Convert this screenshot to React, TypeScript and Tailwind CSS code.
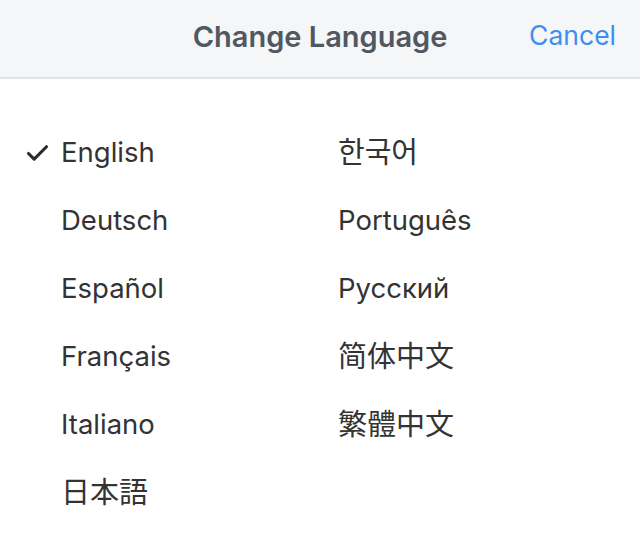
import { Check } from "lucide-react";

const left = ["English", "Deutsch", "Español", "Français", "Italiano", "日本語"];
const right = ["한국어", "Português", "Русский", "简体中文", "繁體中文"];

const cjk = ["日本語", "한국어", "简体中文", "繁體中文"];

const font = {
  fontFamily:
    'Inter, "Noto Sans CJK JP", "Noto Sans CJK KR", "Noto Sans CJK SC", sans-serif',
};

function Item({ name, selected }: { name: string; selected?: boolean }) {
  return (
    <div className="flex h-[68px] items-center">
      <div className="flex w-[37px] items-center">
        {selected && <Check className="h-[27px] w-[27px] text-[#2b2b2b]" strokeWidth={2.75} />}
      </div>
      <span
        className={
          cjk.includes(name)
            ? "text-[29px] text-[#333333]"
            : "text-[27.5px] text-[#333333]"
        }
      >
        {name}
      </span>
    </div>
  );
}

export default function App() {
  return (
    <div className="h-[548px] w-[640px] bg-white" style={font}>
      <div className="relative flex h-[79px] items-center justify-center border-b-2 border-[#e2e4e7] bg-[#f5f6f8] pb-[4px]">
        <h1 className="text-[29px] font-semibold text-[#505861]">Change Language</h1>
        <button className="absolute right-[24px] top-[16px] text-[26.5px] text-[#3d8ef2]">
          Cancel
        </button>
      </div>
      <div className="grid grid-cols-[277px_277px] pl-[24px] pt-[40px]">
        <div className="flex flex-col">
          {left.map((n, i) => (
            <Item key={n} name={n} selected={i === 0} />
          ))}
        </div>
        <div className="flex flex-col">
          {right.map((n) => (
            <Item key={n} name={n} />
          ))}
        </div>
      </div>
    </div>
  );
}
